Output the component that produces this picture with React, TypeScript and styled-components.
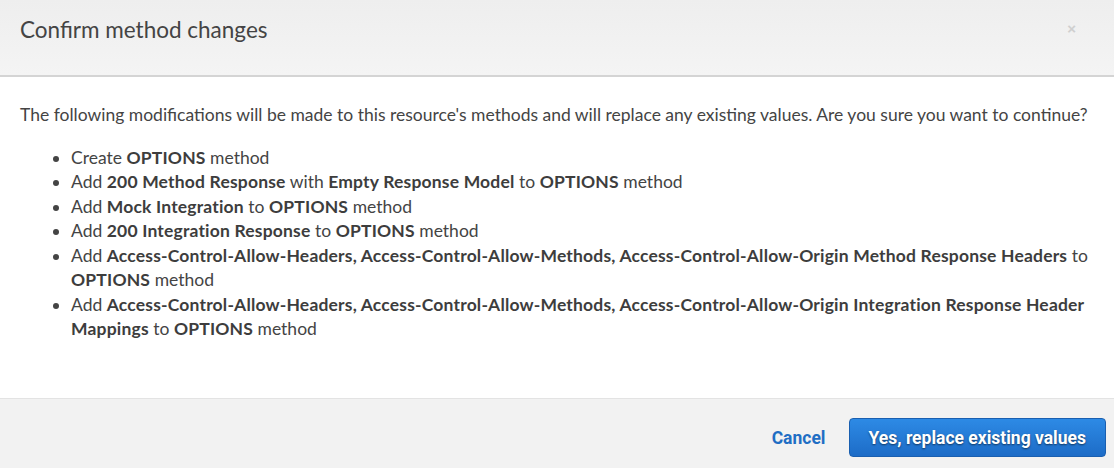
import React from 'react';
import styled, {createGlobalStyle} from 'styled-components';

const GlobalStyle = createGlobalStyle`
  html, body {
    margin: 0;
    padding: 0;
    background: #ffffff;
  }
  body {
    font-family: Lato, "Open Sans", sans-serif;
    color: #444444;
  }
`;

type Change = React.ReactNode;

const changes: Change[] = [
  <>Create <b>OPTIONS</b> method</>,
  <>Add <b>200 Method Response</b> with <b>Empty Response Model</b> to <b>OPTIONS</b> method</>,
  <>Add <b>Mock Integration</b> to <b>OPTIONS</b> method</>,
  <>Add <b>200 Integration Response</b> to <b>OPTIONS</b> method</>,
  <>
    Add{' '}
    <b>
      Access-Control-Allow-Headers, Access-Control-Allow-Methods, Access-Control-Allow-Origin Method
      Response Headers
    </b>{' '}
    to <b>OPTIONS</b> method
  </>,
  <>
    Add{' '}
    <b>
      Access-Control-Allow-Headers, Access-Control-Allow-Methods, Access-Control-Allow-Origin
      Integration Response Header Mappings
    </b>{' '}
    to <b>OPTIONS</b> method
  </>,
];

export default function App() {
  return (
    <>
      <GlobalStyle />
      <Dialog.Container>
        <Dialog.Header>
          <Dialog.Title>Confirm method changes</Dialog.Title>
          <Dialog.Close aria-label="Close">×</Dialog.Close>
        </Dialog.Header>
        <Dialog.Main>
          <Dialog.Lead>
            The following modifications will be made to this resource's methods and will replace any
            existing values. Are you sure you want to continue?
          </Dialog.Lead>
          <Dialog.List>
            {changes.map((item, index) => (
              <li key={`change-${index}`}>{item}</li>
            ))}
          </Dialog.List>
        </Dialog.Main>
        <Dialog.Footer>
          <Dialog.LinkButton>Cancel</Dialog.LinkButton>
          <Dialog.PrimaryButton>Yes, replace existing values</Dialog.PrimaryButton>
        </Dialog.Footer>
      </Dialog.Container>
    </>
  );
}

const Dialog = {
  Container: styled.div`
    width: 1114px;
    min-height: 468px;
    display: flex;
    flex-direction: column;
    background: #ffffff;
  `,
  Header: styled.header`
    height: 77px;
    box-sizing: border-box;
    display: flex;
    align-items: center;
    justify-content: space-between;
    padding: 0 38px 0 20px;
    background: linear-gradient(#eeeeee, #f4f4f4);
    border-bottom: 2px solid #d4d4d4;
  `,
  Title: styled.h3`
    margin: 0 0 16px 0;
    font-size: 22.5px;
    font-weight: 400;
    color: #444444;
  `,
  Close: styled.button`
    border: 0;
    background: none;
    padding: 0;
    margin-bottom: 18px;
    font-family: Arial, "Liberation Sans", sans-serif;
    font-size: 15px;
    font-weight: 700;
    color: #cfcfcf;
    cursor: pointer;
  `,
  Main: styled.section`
    flex: 1;
    padding: 26px 20px 0 20px;
    font-size: 17.5px;
    line-height: 24.5px;
  `,
  Lead: styled.p`
    margin: 0 0 18px 0;
  `,
  List: styled.ul`
    margin: 0;
    padding-left: 51px;
    b {
      font-weight: 700;
      letter-spacing: 0.18px;
      color: #3d3d3d;
    }
  `,
  Footer: styled.footer`
    height: 70px;
    box-sizing: border-box;
    display: flex;
    align-items: flex-start;
    justify-content: flex-end;
    gap: 23px;
    padding: 19px 8px 0 20px;
    background: #f2f2f2;
    border-top: 1px solid #e3e3e3;
  `,
  LinkButton: styled.button`
    height: 39px;
    border: 0;
    background: none;
    padding: 0;
    font-family: Roboto, "Liberation Sans", sans-serif;
    font-size: 17.5px;
    font-weight: 700;
    color: #1f6ec4;
    cursor: pointer;
  `,
  PrimaryButton: styled.button`
    height: 39px;
    padding: 0 19px;
    border: 1px solid #1a5fb0;
    border-radius: 4px;
    background: linear-gradient(#2d8ae5, #1d6cc7);
    font-family: Roboto, "Liberation Sans", sans-serif;
    font-size: 17.5px;
    font-weight: 700;
    color: #ffffff;
    text-shadow: 0 1px 2px rgba(0, 0, 0, 0.55);
    cursor: pointer;
  `,
};
